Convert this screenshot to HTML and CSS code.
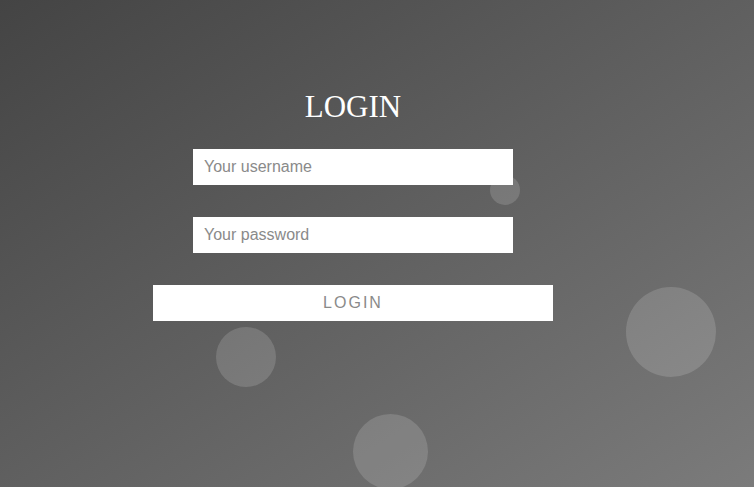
FILE: index.html
```html
<!DOCTYPE html>
<html>
<head>
<meta charset="utf-8">
<link rel="stylesheet" href="styles.css">
</head>
<body>
<div class="page">
  <div class="form-wrap">
    <h1 class="title">LOGIN</h1>
    <form class="form">
      <input class="field" type="text" placeholder="Your username">
      <input class="field" type="password" placeholder="Your password">
      <button class="btn" type="button">LOGIN</button>
    </form>
  </div>
  <ul class="bubbles">
    <li class="bubble b1"></li>
    <li class="bubble b2"></li>
    <li class="bubble b3"></li>
    <li class="bubble b4"></li>
  </ul>
</div>
</body>
</html>
```
FILE: styles.css
```css
html, body {
  margin: 0;
  padding: 0;
  height: 100%;
}
body {
  font-family: "Liberation Sans", Arial, sans-serif;
  overflow: hidden;
}
.page {
  position: relative;
  width: 100%;
  height: 100%;
  background: linear-gradient(to bottom right, #444444 0%, #7b7b7b 100%);
  overflow: hidden;
}
.form-wrap {
  position: relative;
  z-index: 2;
  width: 400px;
  margin-left: 153px;
  padding-top: 89px;
  display: flex;
  flex-direction: column;
  align-items: center;
}
.title {
  margin: 0;
  font-family: "Liberation Serif", "Times New Roman", serif;
  font-weight: normal;
  font-size: 31px;
  line-height: 36px;
  color: #ffffff;
}
.form {
  margin-top: 24px;
  display: flex;
  flex-direction: column;
  align-items: center;
  gap: 32px;
  width: 100%;
}
.field {
  box-sizing: border-box;
  width: 320px;
  height: 36px;
  border: 0;
  outline: 0;
  padding: 0 11px;
  background: #ffffff;
  font-family: "Liberation Sans", Arial, sans-serif;
  font-size: 16px;
  color: #555;
}
.field::placeholder {
  color: #8a8a8a;
}
.btn {
  box-sizing: border-box;
  width: 400px;
  height: 36px;
  border: 0;
  padding: 0;
  background: #ffffff;
  font-family: "Liberation Sans", Arial, sans-serif;
  font-size: 16px;
  letter-spacing: 2px;
  color: #8a8a8a;
}
.bubbles {
  list-style: none;
  margin: 0;
  padding: 0;
  position: absolute;
  inset: 0;
  z-index: 1;
}
.bubble {
  position: absolute;
  border-radius: 50%;
  background: rgba(255, 255, 255, 0.15);
}
.b1 { left: 490px; top: 175px; width: 30px; height: 30px; }
.b2 { left: 216px; top: 327px; width: 60px; height: 60px; }
.b3 { left: 626px; top: 287px; width: 90px; height: 90px; }
.b4 { left: 353px; top: 414px; width: 75px; height: 75px; }
```
